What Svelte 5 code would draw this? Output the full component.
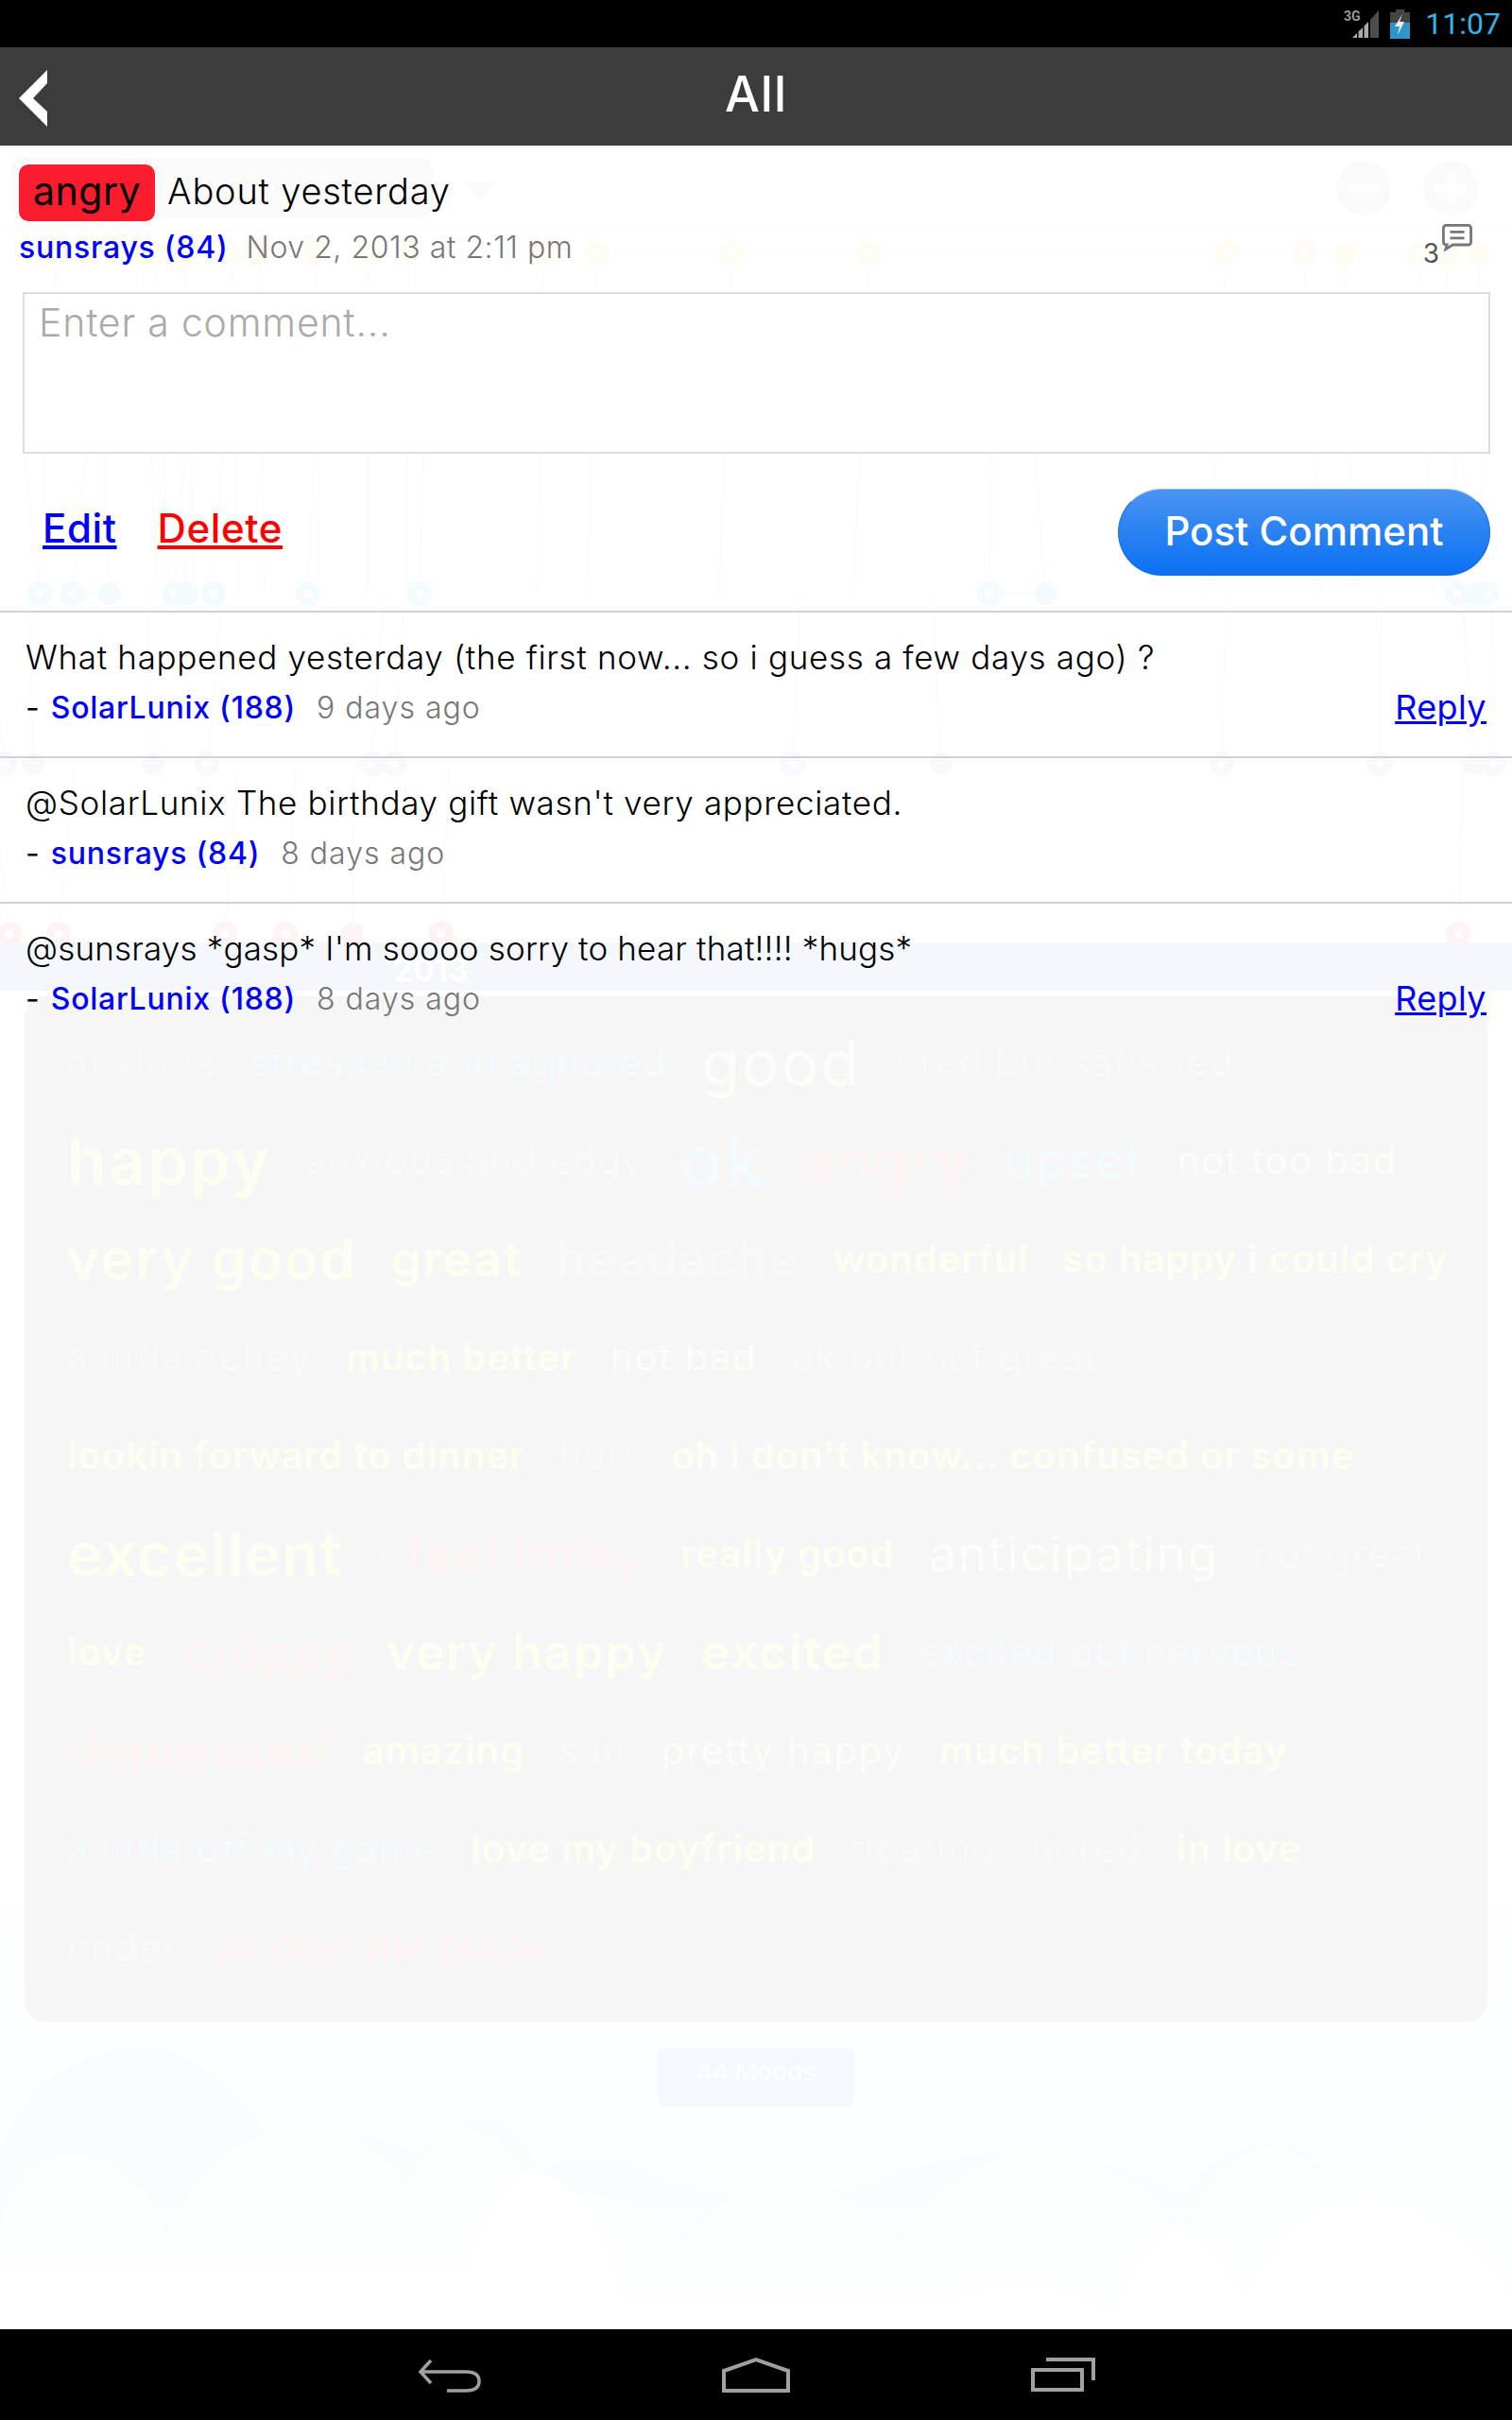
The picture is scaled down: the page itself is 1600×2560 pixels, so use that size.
<script>
  const pins = [
    { y: 268, color: '#fffdf3', xs: [60, 150, 165, 195, 245, 275, 335, 390, 433, 575, 632, 774, 919, 1298, 1380, 1501, 1530], solid: [1423, 1565] },
    { y: 628, color: '#f3fbff', xs: [42, 77, 185, 226, 326, 444, 1047, 1542, 1573], solid: [116, 198, 1106, 1560] },
    { y: 808, color: '#fbf8fd', xs: [5, 219, 393, 417, 839, 1293, 1460, 1580], solid: [35, 162, 996, 1560] },
    { y: 988, color: '#fff3f3', xs: [10, 62, 238, 302, 467, 1543], solid: [373] }
  ];
  const moodRows = [
    [['anxious', 'n', 's'], ['stressed and agitated', 'b', 's'], ['good', 'g', 'g'], ['tired but satisfied', 'n', 's']],
    [['happy', 'y', 'xb'], ['anxious and edgy', 'n', 's'], ['ok', 'b', 'x'], ['angry', 'r', 'a'], ['upset', 'b', 'l'], ['not too bad', 'g', 's']],
    [['very good', 'y', 'w'], ['great', 'y', 'h'], ['headache', 'n', 'l'], ['wonderful', 'y', 'h2'], ['so happy i could cry', 'y', 'h2']],
    [['a little achey', 'n', 's'], ['much better', 'y', 'h2'], ['not bad', 'g', 's'], ['ok but not great', 'n', 's']],
    [['lookin forward to dinner', 'y', 'h2'], ['hurt', 'n', 's'], ["oh i don't know... confused or some", 'y', 'h2']],
    [['excellent', 'y', 'xw'], ['i feel lousy', 'r', 'l'], ['really good', 'y', 'h2'], ['anticipating', 'g', 'l'], ['not great', 'n', 's']],
    [['love', 'y', 'h2'], ['crappy', 'r', 'l'], ['very happy', 'y', 'h'], ['excited', 'y', 'h'], ['excited but nervous', 'b', 's']],
    [['depressed', 'r', 'l'], ['amazing', 'y', 'h2'], ['sad', 'n', 's'], ['pretty happy', 'g', 's'], ['much better today', 'y', 'h2']],
    [['a little off my game', 'b', 's'], ['love my boyfriend', 'y', 'h2'], ['floating', 'n', 's'], ['bored', 'n', 's'], ['in love', 'y', 'h2']],
    [['under', 'n', 's'], ['all over the place', 'r', 's']]
  ];
  const comments = [
    { text: 'What happened yesterday (the first now... so i guess a few days ago) ?', who: 'SolarLunix (188)', when: '9 days ago', reply: true, tight: false },
    { text: "@SolarLunix The birthday gift wasn't very appreciated.", who: 'sunsrays (84)', when: '8 days ago', reply: false, tight: false },
    { text: "@sunsrays *gasp* I'm soooo sorry to hear that!!!! *hugs*", who: 'SolarLunix (188)', when: '8 days ago', reply: true, tight: true }
  ];
</script>

<div class="screen">
  <div class="ghost" aria-hidden="true">
    <div class="ghost-top">
      <div class="date-pill">19 Nov 2013</div>
      <div class="tri"></div>
      <div class="round"><span class="minus"></span></div>
      <div class="round"><span class="minus"></span><span class="plusv"></span></div>
    </div>
    <svg class="chart" width="1600" height="1000" viewBox="0 0 1600 1000">
      <line x1="0" y1="243" x2="1600" y2="243" stroke="#fcfcfc" stroke-width="2" />
      <line x1="632" y1="268" x2="1500" y2="268" stroke="#fdfdfd" stroke-width="2" />
      <line x1="77" y1="628" x2="116" y2="628" stroke="#f6fbff" stroke-width="2" />
      <line x1="1047" y1="628" x2="1106" y2="628" stroke="#f6fbff" stroke-width="2" />
      {#each pins as row, i}
        {#each [...row.xs, ...row.solid] as x, k}
          <line x1={x} y1={row.y} x2={x + ((k * 37) % 40) - 20} y2={i === 0 ? 628 : row.y - 180} stroke="#fcfcfc" stroke-width="2" />
        {/each}
      {/each}
      {#each pins as row}
        {#each row.xs as x}
          <circle cx={x} cy={row.y} r="9" fill="none" stroke={row.color} stroke-width="9" />
        {/each}
        {#each row.solid as x}
          <circle cx={x} cy={row.y} r="12" fill={row.color} />
        {/each}
      {/each}
    </svg>
    <div class="year">2013</div>
    <div class="panel">
      {#each moodRows as row}
        <div class="mood-row">
          {#each row as m}
            <span class="mood c-{m[1]} z-{m[2]}">{m[0]}</span>
          {/each}
        </div>
      {/each}
    </div>
    <div class="count">44 Moods</div>
    <svg class="clouds" width="1600" height="320" viewBox="0 0 1600 320">
      <defs>
        <linearGradient id="sky" x1="0" y1="0" x2="0" y2="1">
          <stop offset="0" stop-color="#f8fcfe" />
          <stop offset="1" stop-color="#fcfefe" />
        </linearGradient>
      </defs>
      <path fill="url(#sky)" d="M0 130Q30 60 70 45Q160 -5 230 55Q270 90 290 125Q380 100 440 135Q480 90 530 100Q560 120 570 150Q640 120 700 160Q750 180 900 170Q1000 130 1110 130Q1230 160 1250 180Q1300 110 1370 125Q1410 150 1445 195Q1500 90 1600 70V320H0Z" />
      <path fill="#fdfefe" d="M0 210Q30 130 75 135Q150 140 175 225Q230 110 320 105Q400 110 430 170Q460 100 495 105Q545 120 568 185Q630 165 680 195Q710 220 725 230Q780 160 825 155Q900 165 945 235Q1020 130 1100 130Q1220 150 1250 230Q1280 130 1355 125Q1410 160 1445 195Q1500 90 1600 70V320H0Z" />
      <path fill="#ffffff" d="M490 255Q530 150 565 150Q630 170 660 285H1010Q1090 250 1180 300Q1210 215 1250 215Q1290 230 1315 285Q1370 180 1440 180Q1540 190 1600 280V320H0V255Z" />
    </svg>
  </div>

  <div class="status">
    <svg class="signal" width="38" height="32" viewBox="0 0 38 32">
      <text x="0" y="13" class="g3">3G</text>
      <path d="M9 31L14 26V31Z" fill="#aaa" />
      <path d="M15.500 24.500L20 20V31H15.500Z" fill="#aaa" />
      <path d="M21.500 18.500L26 14V31H21.500Z" fill="#aaa" />
      <path d="M28 12L37 2V31H28Z" fill="#4d4d4d" />
    </svg>
    <svg class="battery" width="21" height="31" viewBox="0 0 21 31">
      <path d="M6 0H15V3H21V31H0V3H6Z" fill="#444" />
      <rect x="0" y="14" width="21" height="17" fill="#2f97c8" />
      <path d="M13 5L5 18H10L8 27L15 13H10Z" fill="#eee" />
    </svg>
    <span class="time">11:07</span>
  </div>

  <header class="bar">
    <svg class="back" width="30" height="60" viewBox="0 0 30 60">
      <path d="M30 0V14L15 30L30 44V60L0 30Z" fill="#fff" />
    </svg>
    <h1>All</h1>
  </header>

  <main class="content">
    <section class="post">
      <div class="title">
        <span class="tag">angry</span>
        <span class="subject">About yesterday</span>
      </div>
      <div class="meta">
        <span class="who">sunsrays (84)</span>
        <span class="when">Nov 2, 2013 at 2:11 pm</span>
        <span class="ccount">
          <span class="cnum">3</span>
          <svg width="32" height="30" viewBox="0 0 34 30">
            <path d="M5 1.500H29Q32.500 1.500 32.500 5V20Q32.500 23.500 29 23.500H12L4 28.500L5.500 23.500Q1.500 23.500 1.500 20V5Q1.500 1.500 5 1.500Z" fill="none" stroke="#777" stroke-width="3" />
            <path d="M9 9H25M9 16H25" stroke="#777" stroke-width="3" />
          </svg>
        </span>
      </div>
      <div class="input">Enter a comment...</div>
      <div class="actions">
        <a class="link edit" href="#edit">Edit</a>
        <a class="link del" href="#delete">Delete</a>
        <button class="send">Post Comment</button>
      </div>
    </section>

    {#each comments as c}
      <article class="comment">
        <p class:tight={c.tight}>{c.text}</p>
        <div class="by">
          <span class="dash">-</span>
          <span class="who">{c.who}</span>
          <span class="when">{c.when}</span>
          {#if c.reply}<a class="reply" href="#reply">Reply</a>{/if}
        </div>
      </article>
    {/each}
  </main>

  <footer class="nav">
    <svg width="66" height="38" viewBox="0 0 66 38">
      <path d="M13 4L2 16L13 28M3 16H50Q64 16 64 26Q64 36 50 36H30" fill="none" stroke="#a0a0a0" stroke-width="3.500" />
    </svg>
    <svg width="72" height="38" viewBox="0 0 72 38">
      <path d="M2 36V15L36 3L70 15V36Z" fill="none" stroke="#a0a0a0" stroke-width="4" />
    </svg>
    <svg width="68" height="36" viewBox="0 0 68 36">
      <path d="M16 2H66V24" fill="none" stroke="#a0a0a0" stroke-width="4" />
      <rect x="2" y="13" width="52" height="21" fill="none" stroke="#a0a0a0" stroke-width="4" />
    </svg>
  </footer>
</div>

<style>
  :global(body) { margin: 0; background: #fff; }
  .screen {
    position: relative;
    width: 1600px;
    height: 2560px;
    overflow: hidden;
    display: flex;
    flex-direction: column;
    font-family: Inter, "Liberation Sans", sans-serif;
    color: #000;
  }
  .status {
    position: relative;
    flex: 0 0 50px;
    background: #000;
    display: flex;
    align-items: center;
    justify-content: flex-end;
    padding-right: 12px;
    gap: 11px;
  }
  .g3 { font: 700 14px Roboto, sans-serif; fill: #999; }
  .time { color: #33b5e5; font: 400 32px/1 Roboto, sans-serif; margin-left: 5px; }
  .bar {
    position: relative;
    flex: 0 0 104px;
    background: #3c3c3c;
    display: flex;
    align-items: center;
    justify-content: center;
  }
  .back { position: absolute; left: 20px; top: 24px; }
  .bar h1 { margin: 0 0 6px; color: #fff; font-size: 52px; font-weight: 500; letter-spacing: 1px; }
  .content { position: relative; flex: 1; }
  .post { box-sizing: border-box; height: 494px; border-bottom: 2px solid #d2d2d2; padding: 20px 23px 0 20px; }
  .title { display: flex; align-items: center; gap: 13px; }
  .tag {
    box-sizing: border-box;
    height: 60px;
    width: 144px;
    padding-bottom: 5px;
    background: #fb1c2e;
    border-radius: 10px;
    display: flex;
    align-items: center;
    justify-content: center;
    font-size: 41px;
    letter-spacing: 0.5px;
  }
  .subject { font-size: 38px; font-weight: 300; letter-spacing: 0.8px; padding-bottom: 5px; }
  .meta { display: flex; align-items: center; gap: 19px; margin-top: 5px; height: 44px; font-size: 32px; }
  .who { color: #00f; font-weight: 500; letter-spacing: 0.75px; }
  .when { color: #777; font-weight: 300; letter-spacing: 0.55px; }
  .ccount { margin-left: auto; margin-right: 19px; color: #555; display: flex; align-items: flex-start; gap: 3px; }
  .ccount svg { margin-top: -4px; }
  .cnum { font-size: 28px; line-height: 28px; margin-top: 14px; }
  .input {
    margin: 26px 0 0 4px;
    height: 171px;
    box-sizing: border-box;
    border: 2px solid #ddd;
    background: #fff;
    padding: 6px 15px;
    font-size: 41px;
    line-height: 48px;
    font-weight: 300;
    letter-spacing: 0.8px;
    color: #aaa;
  }
  .actions { display: flex; align-items: center; margin: 37px 0 0 25px; height: 92px; gap: 43px; }
  .link { font-size: 42px; font-weight: 500; letter-spacing: 0.6px; margin-bottom: 10px; }
  .edit { color: #00f; }
  .del { color: #f00; }
  .send {
    margin-left: auto;
    width: 394px;
    height: 92px;
    padding: 0 0 4px;
    border-radius: 46px;
    border: 1px solid #0b6ee6;
    border-top-color: #8ab9f5;
    background: linear-gradient(#4a94f2, #0a70f2);
    color: #fff;
    font: 500 42px Inter, sans-serif;
  }
  .comment { height: 154px; box-sizing: border-box; border-bottom: 2px solid #d2d2d2; padding: 25px 27px 0; }
  .comment:last-child { border-bottom: none; }
  .comment p { margin: 0; font-size: 35px; font-weight: 300; line-height: 44px; white-space: nowrap; letter-spacing: 0.68px; }
  .comment p.tight { letter-spacing: 0.18px; }
  .by { display: flex; align-items: center; font-size: 32px; margin-top: 9px; height: 44px; }
  .dash { margin-right: 12px; }
  .by .when { margin-left: 22px; letter-spacing: 1px; }
  .reply { margin-left: auto; color: #00f; font-size: 36px; letter-spacing: 0.4px; }

  .ghost { position: absolute; left: 0; top: 154px; width: 1600px; height: 2310px; background: linear-gradient(#fff 1800px, #fcfeff 2050px, #fff); }
  .ghost-top { position: relative; height: 0; }
  .date-pill {
    position: absolute; left: 12px; top: 12px; width: 446px; height: 64px; border-radius: 14px; background: #fafafa;
    color: #fdfdfd; font-size: 40px; text-align: center; line-height: 64px; font-weight: 600;
  }
  .tri { position: absolute; left: 490px; top: 38px; width: 0; height: 0; border: 18px solid transparent; border-top: 19px solid #fafafa; border-bottom: 0; }
  .round { position: absolute; left: 1414px; top: 16px; width: 58px; height: 58px; border-radius: 50%; background: #fafafa; }
  .round + .round { left: 1506px; }
  .minus { position: absolute; left: 12px; top: 25px; width: 34px; height: 9px; background: #fff; }
  .plusv { position: absolute; left: 25px; top: 12px; width: 9px; height: 34px; background: #fff; }
  .chart { position: absolute; left: 0; top: -154px; }
  .year {
    position: absolute; left: 0; top: 843px; width: 1600px; height: 51px; box-sizing: border-box;
    padding-left: 416px; background: #f4f8fd; color: #fff; font-size: 34px; font-weight: 600; line-height: 58px;
  }
  .panel {
    position: absolute; left: 26px; top: 900px; width: 1548px; height: 1085px; box-sizing: border-box;
    background: #f6f6f6; border-radius: 22px;
    padding: 32px 0 0 45px;
  }
  .mood-row { display: flex; align-items: center; gap: 36px; height: 104px; }
  .mood { line-height: 76px; height: 104px; white-space: nowrap; letter-spacing: 0.035em; }
  .z-s { font-size: 40px; letter-spacing: 0.04em; }
  .z-l { font-size: 52px; }
  .z-a { font-size: 62px; }
  .z-g { font-size: 66px; }
  .z-x { font-size: 76px; }
  .z-xb { font-size: 68px; font-weight: 600; }
  .z-xw { font-size: 64px; font-weight: 600; letter-spacing: 0.02em; }
  .z-w { font-size: 59px; font-weight: 600; }
  .z-h { font-size: 52px; font-weight: 600; letter-spacing: 0.03em; }
  .z-h2 { font-size: 40px; font-weight: 600; letter-spacing: 0.025em; }
  .c-n { color: #f9f9f9; }
  .c-b { color: #f3fbff; }
  .c-g { color: #fafdf8; }
  .c-y { color: #fefdf2; }
  .c-r { color: #fff3f3; }
  .count {
    position: absolute; left: 696px; top: 2012px; width: 208px; height: 62px; background: #f5f8fe; border-radius: 6px;
    color: #fcfdff; font-size: 26px; font-weight: 600; text-align: center; line-height: 52px;
  }
  .clouds { position: absolute; left: 0; top: 1990px; }

  .nav {
    position: relative;
    flex: 0 0 96px;
    background: #000;
    display: flex;
    align-items: center;
    padding-left: 443px;
    gap: 255px;
  }
</style>
